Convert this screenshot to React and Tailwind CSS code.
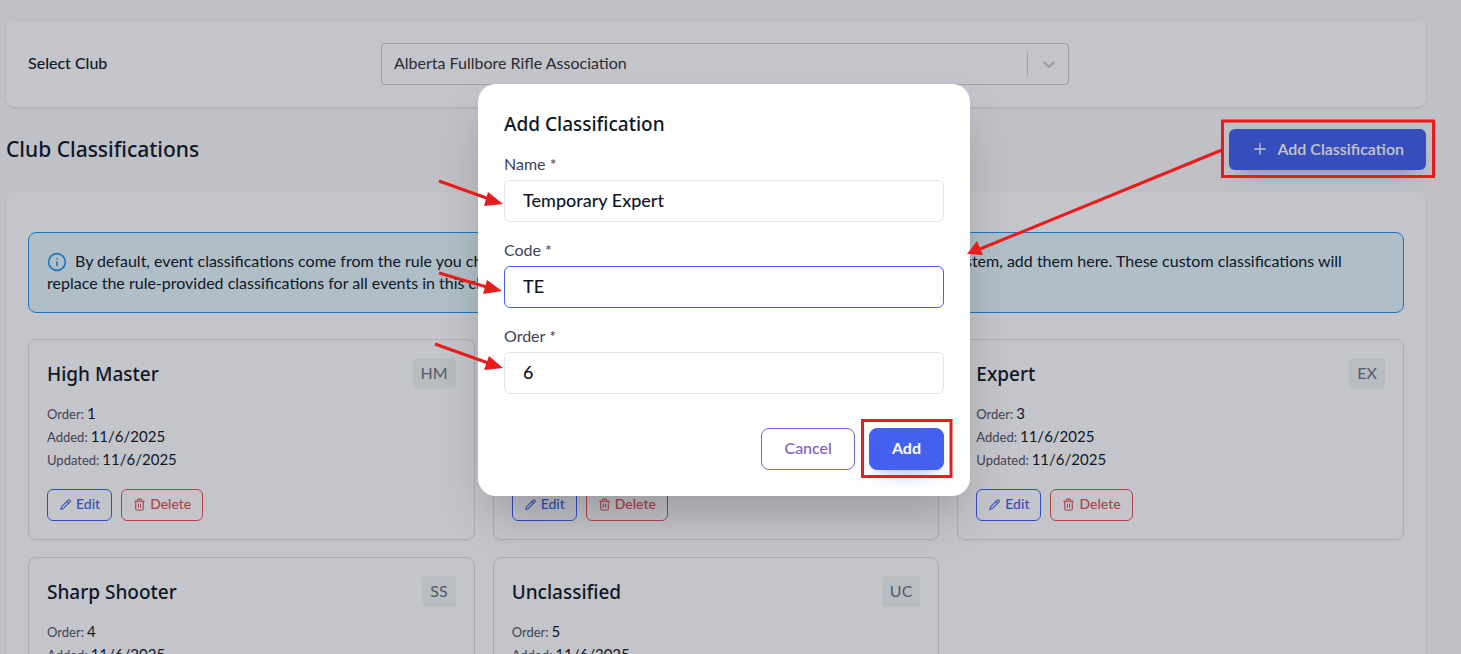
import { useState } from 'react'
import { Info, Plus, Trash2 } from 'lucide-react'

const CLUBS = ['Alberta Fullbore Rifle Association']

const CLASSIFICATIONS = [
  { name: 'High Master', code: 'HM', order: 1, added: '11/6/2025', updated: '11/6/2025' },
  { name: 'Master', code: 'MA', order: 2, added: '11/6/2025', updated: '11/6/2025' },
  { name: 'Expert', code: 'EX', order: 3, added: '11/6/2025', updated: '11/6/2025' },
  { name: 'Sharp Shooter', code: 'SS', order: 4, added: '11/6/2025', updated: '11/6/2025' },
  { name: 'Unclassified', code: 'UC', order: 5, added: '11/6/2025', updated: '11/6/2025' },
]

function PencilIcon({ className = '' }) {
  return (
    <svg
      viewBox="0 0 24 24"
      fill="none"
      stroke="currentColor"
      strokeWidth="2"
      strokeLinecap="round"
      strokeLinejoin="round"
      className={className}
      aria-hidden
    >
      <path d="M5 16 17 4a2.2 2.2 0 0 1 3.2 3.2L8.2 19.2 3 21Z" />
      <path d="m14.5 6.5 3.2 3.2" />
    </svg>
  )
}

function ChevronIcon({ className = '' }) {
  return (
    <svg viewBox="0 0 20 20" fill="currentColor" className={className} aria-hidden>
      <path d="M4.516 7.548c0.436-0.446 1.043-0.481 1.576 0l3.908 3.747 3.908-3.747c0.533-0.481 1.141-0.446 1.574 0 0.436 0.445 0.408 1.197 0 1.615-0.406 0.418-4.695 4.502-4.695 4.502-0.217 0.223-0.502 0.335-0.787 0.335s-0.57-0.112-0.789-0.335c0 0-4.287-4.084-4.695-4.502s-0.436-1.17 0-1.615z" />
    </svg>
  )
}

function Detail({ label, children }) {
  return (
    <div className="flex h-[23px] items-baseline gap-[3px]">
      <dt className="text-[13px] text-[#515365]">{label}:</dt>
      <dd className="text-[15px] text-[#0e1726]">{children}</dd>
    </div>
  )
}

function ClassificationCard({ item }) {
  return (
    <article className="rounded-lg border border-[#e0e0e3] bg-white p-[18px] shadow-xs">
      <div className="mb-[11px] flex items-start justify-between">
        <h3 className="font-['Noto_Sans'] text-[19px] font-medium leading-[33px] text-[#0e1726]">{item.name}</h3>
        <span className="rounded bg-[#f1f4f5] px-2 pb-0.5 text-base leading-[29px] text-[#6b7280]">{item.code}</span>
      </div>
      <dl>
        <Detail label="Order">{item.order}</Detail>
        <Detail label="Added">{item.added}</Detail>
        <Detail label="Updated">{item.updated}</Detail>
      </dl>
      <div className="mt-[18px] flex gap-[9px]">
        <button
          type="button"
          className="flex h-8 items-center gap-1 rounded-md border border-[#4361ee] px-[11px] pb-0.5 text-sm font-medium text-[#4361ee]"
        >
          <PencilIcon className="h-[13px] w-[13px]" />
          Edit
        </button>
        <button
          type="button"
          className="flex h-8 items-center gap-1 rounded-md border border-[#e7515a] px-[11px] pb-0.5 text-sm font-medium text-[#e7515a]"
        >
          <Trash2 className="h-[13px] w-[13px]" />
          Delete
        </button>
      </div>
    </article>
  )
}

function Field({ id, label, ...props }) {
  return (
    <div>
      <label htmlFor={id} className="mb-1.5 block text-base leading-5 text-[#3b3f5c]">
        {label} *
      </label>
      <input
        id={id}
        className="block h-[42px] w-full rounded-md border border-[#e0e6ed] px-[18px] pb-0.5 text-lg font-medium text-[#0e1726] outline-none focus:border-[#4361ee]"
        {...props}
      />
    </div>
  )
}

function AddModal() {
  const [form, setForm] = useState({ name: 'Temporary Expert', code: 'TE', order: '6' })
  const update = (key) => (e) => setForm({ ...form, [key]: e.target.value })

  return (
    <div className="absolute inset-0 flex items-start justify-center bg-[#0f172a]/25 pr-[13px] pt-[84px]">
      <form
        role="dialog"
        aria-labelledby="modal-title"
        onSubmit={(e) => e.preventDefault()}
        className="w-full max-w-[492px] rounded-[18px] bg-white p-[26px] shadow-2xl"
      >
        <h2 id="modal-title" className="font-['Noto_Sans'] text-[19px] font-medium leading-7 text-[#0e1726]">
          Add Classification
        </h2>
        <div className="mt-4 flex flex-col gap-[18px]">
          <Field id="name" label="Name" value={form.name} onChange={update('name')} />
          <Field id="code" label="Code" value={form.code} onChange={update('code')} autoFocus />
          <Field id="order" label="Order" inputMode="numeric" value={form.order} onChange={update('order')} />
        </div>
        <div className="mt-[34px] flex justify-end gap-[14px]">
          <button
            type="button"
            className="h-[42px] rounded-lg border border-[#805dca] px-[22px] pb-0.5 text-base font-medium text-[#805dca]"
          >
            Cancel
          </button>
          <button
            type="submit"
            className="h-[42px] rounded-lg border border-[#4361ee] bg-[#4361ee] px-[22px] pb-0.5 text-base font-bold text-white shadow-[0_10px_20px_-10px_rgba(67,97,238,0.6)]"
          >
            Add
          </button>
        </div>
      </form>
    </div>
  )
}

const ARROWS = [
  { line: [1222, 150, 980, 249], head: '967,254 977,241 983,255' },
  { line: [439, 181, 492, 200], head: '503,204 484,206 488,192' },
  { line: [439, 273, 490, 288], head: '502,291 483,294 487,280' },
  { line: [435, 344, 491, 364], head: '503,368 484,370 489,356' },
]

// Red call-outs drawn over the page: two boxes and four arrows
function Callouts() {
  return (
    <svg className="pointer-events-none absolute left-0 top-0" width="1461" height="654" fill="#e81c1c" aria-hidden>
      <g fill="none" stroke="#e81c1c" strokeWidth="3">
        <rect x="1222.5" y="121" width="211" height="55.5" />
        <rect x="862.5" y="420.5" width="88.5" height="56" />
      </g>
      {ARROWS.map(({ line: [x1, y1, x2, y2], head }) => (
        <g key={head}>
          <line x1={x1} y1={y1} x2={x2} y2={y2} stroke="#e81c1c" strokeWidth="3" />
          <polygon points={head} />
        </g>
      ))}
    </svg>
  )
}

export default function App() {
  return (
    <div className="relative h-screen overflow-hidden bg-[#fafafa] font-['Lato',sans-serif] text-[#0e1726]">
      <main className="pl-[6px] pr-[35px] pt-[21px]">
        <section className="flex items-center gap-[9px] rounded-lg bg-white p-[22px] shadow-sm">
          <label htmlFor="club" className="w-1/4 pb-0.5 text-base font-medium">
            Select Club
          </label>
          <div className="relative w-1/2">
            <select
              id="club"
              className="h-[42px] w-full appearance-none rounded border border-[#cccccc] bg-white px-3 pb-0.5 text-base text-[#333333]"
            >
              {CLUBS.map((club) => (
                <option key={club}>{club}</option>
              ))}
            </select>
            <span className="pointer-events-none absolute inset-y-[10px] right-0 flex w-[42px] items-center justify-center border-l border-[#cccccc] text-[#cccccc]">
              <ChevronIcon className="h-5 w-5" />
            </span>
          </div>
        </section>

        <div className="my-[22px] flex items-center justify-between">
          <h1 className="font-['Noto_Sans'] text-[21px] font-medium">Club Classifications</h1>
          <button
            type="button"
            className="flex h-[41px] items-center gap-2 rounded-md bg-[#4361ee] px-[22px] pb-0.5 text-base font-semibold text-white shadow-[0_10px_20px_-10px_rgba(67,97,238,0.6)]"
          >
            <Plus className="h-[18px] w-[18px]" strokeWidth={1.75} />
            Add Classification
          </button>
        </div>

        <section className="rounded-lg bg-white px-[22px] pb-[22px] pt-10 shadow-sm">
          <div className="mb-[26px] rounded-lg border border-[#2196f3] bg-[#e6f6fb] px-[18px] pb-[18px] pt-[17px] text-base leading-[22px]">
            <Info className="mr-2 mt-0.5 inline h-5 w-5 align-top text-[#2196f3]" />
            By default, event classifications come from the rule you choose for each event. If your club uses its own custom
            classification system, add them here. These custom classifications will replace the rule-provided classifications
            for all events in this club.
          </div>
          <div className="grid grid-cols-3 gap-x-[18px] gap-y-[17px]">
            {CLASSIFICATIONS.map((item) => (
              <ClassificationCard key={item.code} item={item} />
            ))}
          </div>
        </section>
      </main>
      <AddModal />
      <Callouts />
    </div>
  )
}
